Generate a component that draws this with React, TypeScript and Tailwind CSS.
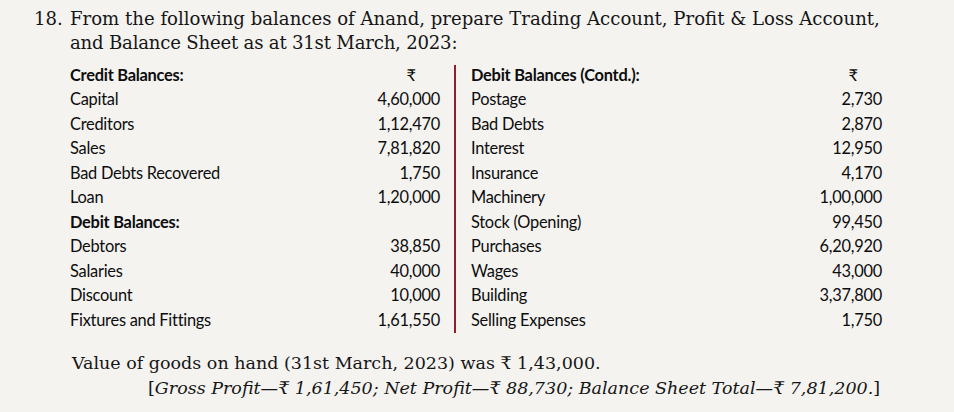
const left: [string, string, boolean?][] = [
  ["Credit Balances:", "₹", true],
  ["Capital", "4,60,000"],
  ["Creditors", "1,12,470"],
  ["Sales", "7,81,820"],
  ["Bad Debts Recovered", "1,750"],
  ["Loan", "1,20,000"],
  ["Debit Balances:", "", true],
  ["Debtors", "38,850"],
  ["Salaries", "40,000"],
  ["Discount", "10,000"],
  ["Fixtures and Fittings", "1,61,550"],
];

const right: [string, string, boolean?][] = [
  ["Debit Balances (Contd.):", "₹", true],
  ["Postage", "2,730"],
  ["Bad Debts", "2,870"],
  ["Interest", "12,950"],
  ["Insurance", "4,170"],
  ["Machinery", "1,00,000"],
  ["Stock (Opening)", "99,450"],
  ["Purchases", "6,20,920"],
  ["Wages", "43,000"],
  ["Building", "3,37,800"],
  ["Selling Expenses", "1,750"],
];

function Column({ rows }: { rows: [string, string, boolean?][] }) {
  return (
    <div className="flex flex-col">
      {rows.map(([label, amount, head], i) => (
        <div key={i} className="flex h-[24.5px] items-center justify-between">
          <span className={head ? "font-bold" : ""}>{label}</span>
          <span className={head ? "w-[58px] text-center" : ""}>{amount}</span>
        </div>
      ))}
    </div>
  );
}

export default function App() {
  return (
    <div className="h-[412px] w-[954px] overflow-hidden bg-[#f4f3f0] text-[#161616]">
      <div className="pt-[7px] font-['DejaVu_Serif',serif] text-[18.1px] leading-[24px]">
        <div className="flex">
          <span className="w-[70px] pl-[34px]">18.</span>
          <span>From the following balances of Anand, prepare Trading Account, Profit &amp; Loss Account,</span>
        </div>
        <div className="pl-[70px] tracking-[-0.2px]">and Balance Sheet as at 31st March, 2023:</div>
      </div>

      <div className="mt-[8px] flex pl-[70px] font-['Lato',sans-serif] text-[16.4px] tracking-[-0.25px] text-[#0d0d0d]">
        <div className="w-[370px]">
          <Column rows={left} />
        </div>
        <div className="mx-[14px] mt-[2px] h-[268px] w-[2px] bg-[#8e1f33]" />
        <div className="w-[412px] pl-[1px]">
          <Column rows={right} />
        </div>
      </div>

      <div className="mt-[18px] font-['DejaVu_Serif',serif] text-[17.5px] leading-[25px]">
        <div className="pl-[72px]">Value of goods on hand (31st March, 2023) was ₹ 1,43,000.</div>
        <div className="pl-[148px]">
          [<i>Gross Profit—₹ 1,61,450; Net Profit—₹ 88,730; Balance Sheet Total—₹ 7,81,200.</i>]
        </div>
      </div>
    </div>
  );
}
